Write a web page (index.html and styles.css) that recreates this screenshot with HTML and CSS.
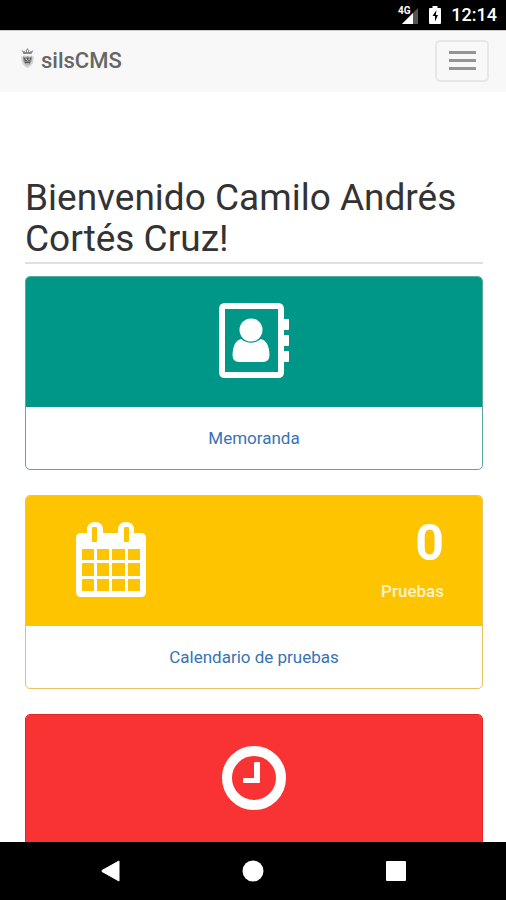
FILE: index.html
```html
<!DOCTYPE html>
<html lang="es">
<head>
<meta charset="utf-8">
<meta name="viewport" content="width=device-width, initial-scale=1">
<title>silsCMS</title>
<link rel="stylesheet" href="styles.css">
</head>
<body>
<div class="status">
  <svg width="22" height="20" viewBox="0 0 22 20" aria-hidden="true">
    <path d="M21 3V19H5Z" fill="#555"/>
    <path d="M16 8V19H5Z" fill="#fff"/>
    <text class="status-net" x="1" y="9">4G</text>
  </svg>
  <svg width="12" height="18" viewBox="0 0 12 18" aria-hidden="true">
    <path d="M3.500 0H8.500V2H11a1 1 0 0 1 1 1V17a1 1 0 0 1-1 1H1a1 1 0 0 1-1-1V3a1 1 0 0 1 1-1H3.500Z" fill="#fff"/>
    <path d="M7.500 4 3.500 10H6V15.500L9 9H6.800Z" fill="#000"/>
  </svg>
  <span class="status-time">12:14</span>
</div>
<header class="navbar">
  <a class="brand" href="#">
    <svg width="15" height="21" viewBox="0 0 15 21" aria-hidden="true">
      <path d="M1.500 2 4 3.500 6 2.500 7.500 0 9 2.500 11 3.500 13.500 2 11.500 6H3.500Z" fill="#888"/>
      <path d="M5 3.500h1M9 3.500h1M7.500 2v2" stroke="#f8f8f8"/>
      <path d="M1 9Q3 6.500 7.500 8 12 6.500 14 9L13 15Q11 18.500 7.500 20 4 18.500 2 15Z" fill="#d4d4d4"/>
      <path d="M3 8.500 6 9.500 7.500 8 9 9.500 12 8.500 11.500 13 10 16 7.500 17.500 5 16 3.500 13Z" fill="#8c8c8c"/>
      <path d="M4 10l2 3 1.500-3L9 13l2-3M5 14.500h5" fill="none" stroke="#555"/>
      <path d="M6 11.500h1M8.500 11.500h1M6 16h3" stroke="#ddd"/>
    </svg>
    <span>silsCMS</span>
  </a>
  <button class="toggle" type="button" aria-label="Menú"><span class="bar"></span><span class="bar"></span><span class="bar"></span></button>
</header>
<main class="page">
  <h1 class="title">Bienvenido Camilo Andrés Cortés Cruz!</h1>
  <section class="card card-green">
    <div class="card-head">
      <svg width="70" height="75" viewBox="0 0 70 75" fill="#fff" aria-hidden="true">
        <path fill-rule="evenodd" d="M6 0H59Q65 0 65 6V16H69Q70 16 70 17V26Q70 27 69 27H65V32H69Q70 32 70 33V42Q70 43 69 43H65V48H69Q70 48 70 49V58Q70 59 69 59H65V69Q65 75 59 75H6Q0 75 0 69V6Q0 0 6 0ZM6 6V69H59V6Z"/>
        <circle cx="32" cy="27" r="11.500"/>
        <path d="M22 36Q32 43.500 42 36 50 38 50.500 52 50.500 59 44 59H20Q13.500 59 13.500 52 14 38 22 36Z"/>
      </svg>
    </div>
    <a class="card-link" href="#">Memoranda</a>
  </section>
  <section class="card card-yellow">
    <div class="card-head card-split">
      <svg width="70" height="75" viewBox="0 0 70 75" fill="#fff" aria-hidden="true">
        <path fill-rule="evenodd" d="M5 11H11V8Q11 0 19 0T27 8V11H42V8Q42 0 50 0T58 8V11H65Q70 11 70 16V70Q70 75 65 75H5Q0 75 0 70V16Q0 11 5 11ZM17 5Q16 5 16 6V19Q16 20 17 20H20Q21 20 21 19V6Q21 5 20 5ZM49 5Q48 5 48 6V19Q48 20 49 20H52Q53 20 53 19V6Q53 5 52 5ZM6 27V38H18V27ZM21 27V38H33V27ZM36 27V38H49V27ZM52 27V38H64V27ZM6 41V54H18V41ZM21 41V54H33V41ZM36 41V54H49V41ZM52 41V54H64V41ZM6 57V69H18V57ZM21 57V69H33V57ZM36 57V69H49V57ZM52 57V69H64V57Z"/>
      </svg>
      <div class="stat"><span class="stat-number">0</span><span class="stat-label">Pruebas</span></div>
    </div>
    <a class="card-link" href="#">Calendario de pruebas</a>
  </section>
  <section class="card card-red">
    <div class="card-head">
      <svg width="64" height="64" viewBox="0 0 64 64" aria-hidden="true">
        <circle cx="32" cy="32" r="27" fill="none" stroke="#fff" stroke-width="10"/>
        <path d="M33 16H37Q38 16 38 17V36Q38 37 37 37H22Q21 37 21 36V33Q21 32 22 32H32V17Q32 16 33 16Z" fill="#fff"/>
      </svg>
    </div>
  </section>
</main>
<nav class="softkeys" aria-label="Sistema">
  <button type="button" aria-label="Atrás"><svg width="20" height="22" viewBox="0 0 20 22"><path d="M19 1V21L2 11.500V10.500Z" fill="#fff" stroke="#fff" stroke-linejoin="round"/></svg></button>
  <button type="button" aria-label="Inicio"><svg width="22" height="22" viewBox="0 0 22 22"><circle cx="11" cy="11" r="10.500" fill="#fff"/></svg></button>
  <button type="button" aria-label="Recientes"><svg width="20" height="20" viewBox="0 0 20 20"><rect width="20" height="20" rx="1" fill="#fff"/></svg></button>
</nav>
</body>
</html>
```
FILE: styles.css
```css
* { box-sizing: border-box; }

body {
  margin: 0;
  height: 100vh;
  display: flex;
  flex-direction: column;
  overflow: hidden;
  background: #fff;
  color: #333;
  font-family: Roboto, "Liberation Sans", sans-serif;
}

button { border: 0; background: none; padding: 0; }
a { text-decoration: none; }
svg { display: block; flex: none; }

.status {
  flex: none;
  height: 30px;
  padding: 0 9px;
  display: flex;
  align-items: center;
  justify-content: flex-end;
  gap: 10px;
  background: #000;
  color: #fff;
}
.status-net { font-size: 10px; font-weight: 700; fill: #fff; }
.status-time { font-size: 18px; line-height: 30px; font-weight: 500; }

.navbar {
  flex: none;
  height: 62px;
  padding: 0 17px 2px 20px;
  display: flex;
  align-items: center;
  justify-content: space-between;
  background: #f8f8f8;
  border-top: 1px solid #ccc;
}
.brand {
  display: flex;
  align-items: center;
  gap: 6px;
  color: #666;
  font-size: 22px;
  line-height: 28px;
  font-weight: 500;
}
.brand svg { margin-bottom: 4px; }
.toggle {
  width: 54px;
  height: 42px;
  display: flex;
  flex-direction: column;
  align-items: center;
  justify-content: center;
  gap: 5px;
  border: 2px solid #e7e7e7;
  border-radius: 5px;
}
.bar { width: 27px; height: 3px; background: #949494; }

.page {
  flex: 1;
  min-height: 0;
  overflow: hidden;
  padding: 85px 23px 0 25px;
}
.title {
  margin: 0 0 12px;
  padding-bottom: 3px;
  border-bottom: 2px solid #e0e0e0;
  font-size: 37px;
  line-height: 41px;
  font-weight: 400;
}

.card {
  margin-bottom: 25px;
  overflow: hidden;
  border: 1px solid;
  border-radius: 5px;
}
.card-green { border-color: #5aa99c; }
.card-yellow { border-color: #ecc25e; }
.card-red { border-color: #e32626; }
.card-head {
  height: 130px;
  padding-bottom: 4px;
  display: flex;
  align-items: center;
  justify-content: center;
  color: #fff;
}
.card-green .card-head { background: #009688; }
.card-yellow .card-head { background: #ffc400; }
.card-red .card-head { background: #f93333; }
.card-split { justify-content: space-between; padding: 0 38px 4px 50px; }
.stat {
  display: flex;
  flex-direction: column;
  align-items: flex-end;
  gap: 8px;
}
.stat-number { font-size: 50px; line-height: 56px; font-weight: 700; }
.stat-label { font-size: 17px; line-height: 24px; font-weight: 500; color: #fff3cd; }
.card-link {
  display: block;
  padding: 18px;
  text-align: center;
  font-size: 17px;
  line-height: 26px;
  color: #3773b5;
}

.softkeys {
  flex: none;
  height: 58px;
  display: flex;
  align-items: center;
  justify-content: center;
  gap: 122px;
  background: #000;
}
```
